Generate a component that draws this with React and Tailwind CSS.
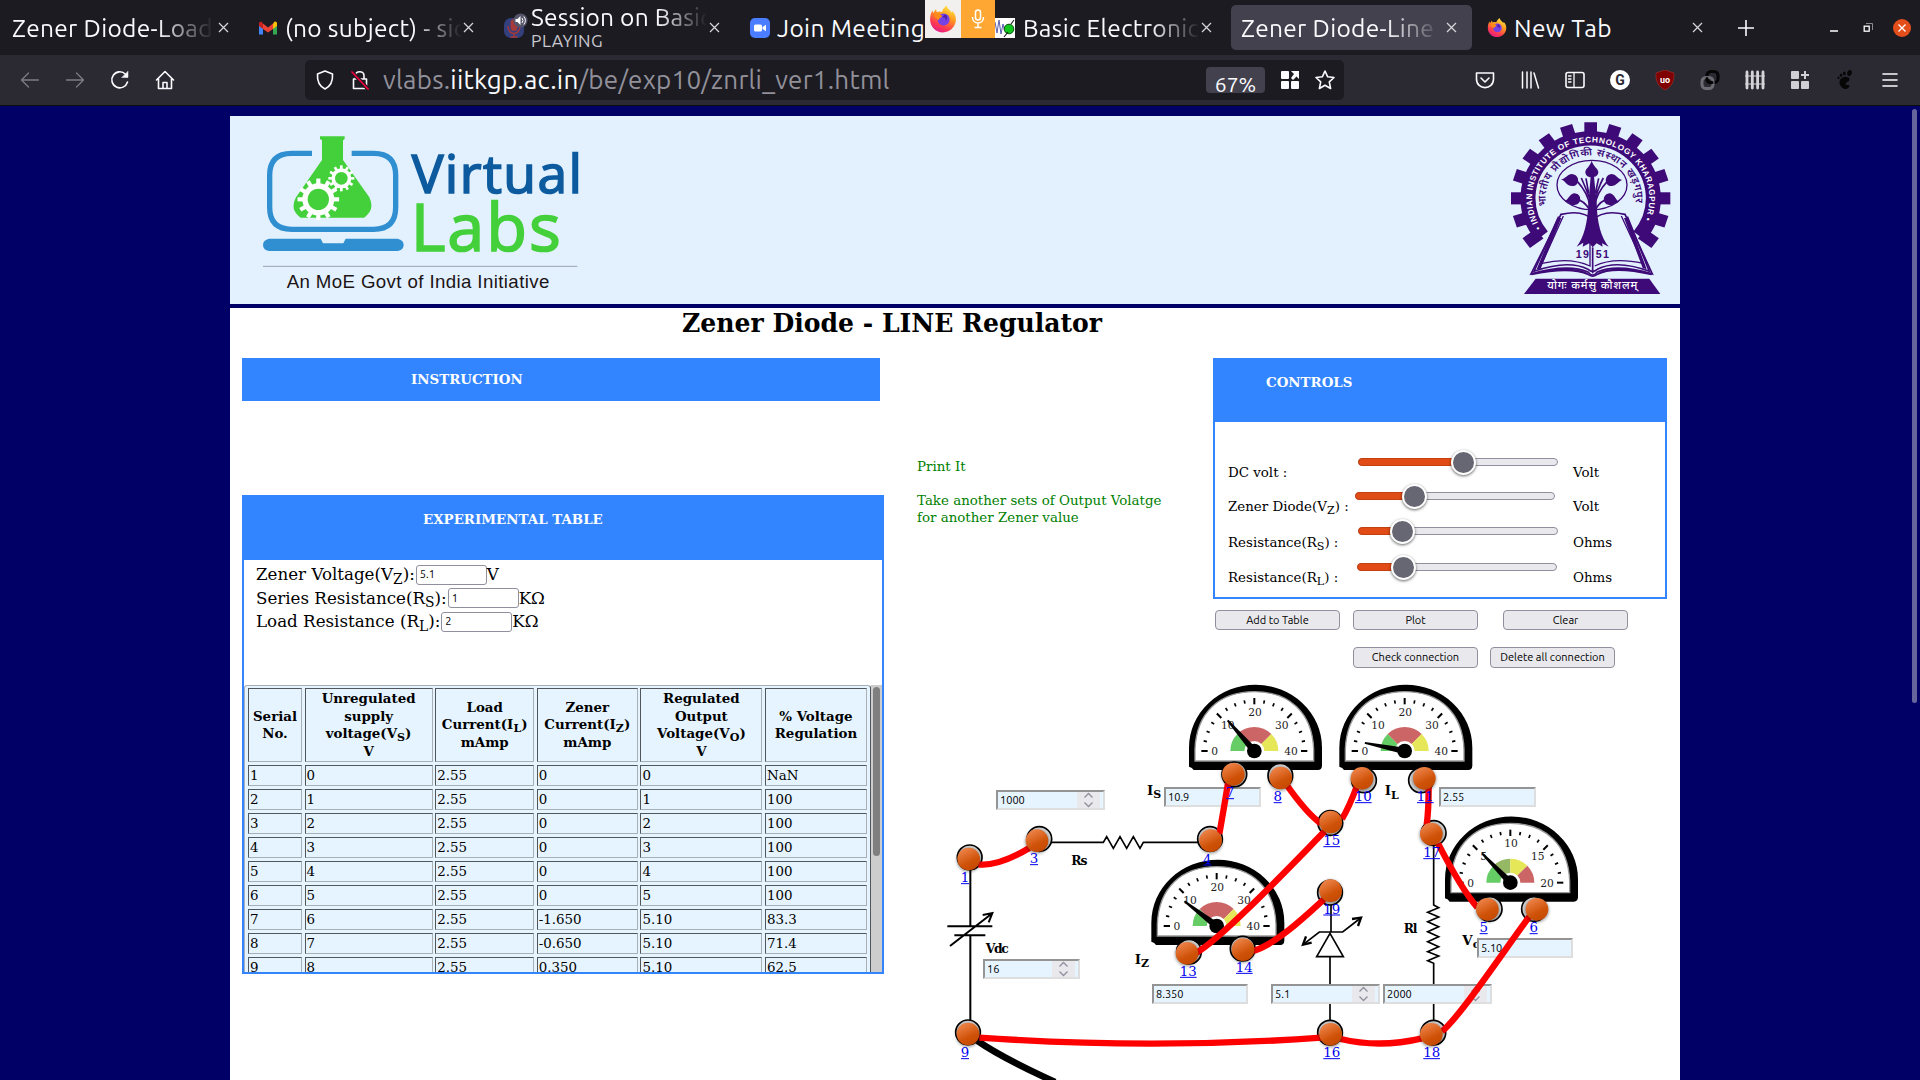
import React from "react";

const UI = "font-['Ubuntu','Noto_Sans',sans-serif]";
const SERIF = "font-['DejaVu_Serif',serif]";

/* ---------- browser chrome ---------- */

function Close({ className = "" }) {
  return (
    <svg className={`h-[11px] w-[11px] shrink-0 ${className}`} viewBox="0 0 11 11" stroke="#d8d8dc" strokeWidth="1.2">
      <path d="M1 1L10 10M10 1L1 10" />
    </svg>
  );
}

function Firefox({ className }) {
  return (
    <svg className={className} viewBox="0 0 24 24">
      <defs>
        <linearGradient id="ffBody" x1="0.8" y1="0" x2="0.3" y2="1">
          <stop offset="0" stopColor="#fff04a" />
          <stop offset="0.4" stopColor="#ff9a1f" />
          <stop offset="0.75" stopColor="#ff3b4e" />
          <stop offset="1" stopColor="#e01a8b" />
        </linearGradient>
      </defs>
      <path d="M15.5 0.5C15 3 18 4 19.5 6.5C20 6 20 5.5 20 5C22.5 8 23.5 10.5 23 14C22 19.5 17.500 23.500 12 23.500C6 23.500 1.500 19 1 13.500C0.800 10 1.500 7 3 4.500L3.500 7L6 3.500L6.500 6C8 5.500 9.500 5.300 11 6C12 3.500 13.500 1.500 15.500 0.500Z" fill="url(#ffBody)" />
      <circle cx="12.500" cy="12.500" r="5.200" fill="#7542e5" />
      <path d="M4 8.500C7 6.500 9.500 8 11.500 9.500C10 11.500 8.500 11 8.500 13C6.500 12 5 10.500 4 8.500Z" fill="#ff8a16" />
      <path d="M11 10.500C14 10 15 12 14 14C16 12.500 16 9.500 14 8Z" fill="#4c1fa8" />
    </svg>
  );
}

function TabTitle({ children, className = "" }) {
  return (
    <span className={`block overflow-hidden whitespace-nowrap text-[24.5px] leading-[30px] text-[#fbfbfe] ${className}`}>
      {children}
    </span>
  );
}

const FADE = "[mask-image:linear-gradient(to_right,black_72%,transparent_100%)]";

function TabBar() {
  return (
    <div className={`relative flex h-[55px] items-center bg-[#1c1b22] ${UI}`}>
      <div className="flex w-[259px] items-center pl-[12px]">
        <TabTitle className={`w-[202px] tracking-[0.3px] ${FADE}`}>Zener Diode-Load</TabTitle>
        <Close className="ml-[4px]" />
      </div>
      <div className="flex w-[244px] items-center">
        <svg className="h-[14px] w-[18px]" viewBox="0 0 18 14">
          <path d="M0 2V13.500H4V5Z" fill="#4285f4" />
          <path d="M18 2V13.500H14V5Z" fill="#34a853" />
          <path d="M0 1.500V5L4 8V2.500L2.500 0.500Z" fill="#c5221f" />
          <path d="M4 2.500V8L9 11.500L14 8V2.500L9 6.500Z" fill="#ea4335" />
          <path d="M14 2.500V8L18 5V1.500L16 0.300Z" fill="#fbbc04" />
        </svg>
        <TabTitle className={`ml-[8px] w-[177px] tracking-[0.3px] ${FADE}`}>(no subject) - sid</TabTitle>
        <Close className="ml-[1px]" />
      </div>
      <div className="flex w-[247px] items-center">
        <svg className="h-[36px] w-[25px]" viewBox="0 0 25 36">
          <rect x="1" y="8" width="20" height="20" rx="7" fill="#34407e" />
          <rect x="7.500" y="9" width="7" height="12" rx="3.500" fill="#a33a3c" />
          <path d="M5 16C5 26 17 26 17 16M11 23V27M7.500 27H14.500" stroke="#a33a3c" strokeWidth="1.500" fill="none" />
          <circle cx="17.500" cy="10.500" r="7" fill="#55556a" />
          <path d="M12.500 9H14.500L17.500 6V15L14.500 12H12.500Z" fill="#fff" />
          <path d="M19 8Q21 10.500 19 13M20.800 6.500Q24 10.500 20.800 14.500" stroke="#fff" fill="none" />
        </svg>
        <div className="flex h-[55px] flex-col pl-[3px] pt-[2px]">
          <TabTitle className={`w-[176px] tracking-[0.2px] ${FADE}`}>Session on Basic</TabTitle>
          <span className="-mt-[2px] text-[17.500px] leading-[22px] tracking-[0.5px] text-[#c9c8ce]">PLAYING</span>
        </div>
        <Close className="ml-[2px]" />
      </div>
      <div className="flex w-[175px] items-center">
        <svg className="h-[20px] w-[20px]" viewBox="0 0 20 20">
          <rect width="20" height="20" rx="5" fill="#4a7dff" />
          <rect x="4" y="6.500" width="8" height="7" rx="1.500" fill="#fff" />
          <path d="M12.500 9L16 6.800V13.200L12.500 11Z" fill="#fff" />
        </svg>
        <TabTitle className="ml-[7px] w-[148px] tracking-[0.35px]">Join Meeting</TabTitle>
      </div>
      <div className="flex h-[38px] w-[70px] self-start">
        <div className="flex w-[36px] items-center justify-center bg-[#f1f0ef]">
          <Firefox className="h-[28px] w-[28px]" />
        </div>
        <div className="flex w-[34px] items-center justify-center bg-[#ffa733]">
          <svg className="h-[20px] w-[14px]" viewBox="0 0 14 20" fill="none" stroke="#fff" strokeWidth="1.500">
            <rect x="4.500" y="1" width="5" height="10" rx="2.500" />
            <path d="M1.500 8C1.500 16 12.500 16 12.500 8M7 14V18M3.500 18.500H10.500" />
          </svg>
        </div>
      </div>
      <div className="flex w-[236px] items-center">
        <svg className="h-[20px] w-[20px]" viewBox="0 0 20 20">
          <rect width="20" height="20" fill="#fff" />
          <path d="M0 4L2 15L4 2L6 16L8 6L9.500 12" stroke="#5a5fb0" fill="none" />
          <circle cx="14" cy="11" r="4.800" fill="#12c81e" stroke="#0a5010" />
          <path d="M9 19L13 14M16 6L19 2" stroke="#222" strokeWidth="1.200" />
        </svg>
        <TabTitle className={`ml-[8px] w-[177px] tracking-[0.3px] ${FADE}`}>Basic Electronics</TabTitle>
        <Close className="ml-[1px]" />
      </div>
      <div className="flex h-[45px] w-[241px] items-center rounded-[5px] bg-[#42414d] pl-[10px]">
        <TabTitle className={`w-[200px] tracking-[0.3px] ${FADE}`}>Zener Diode-Line R</TabTitle>
        <Close className="ml-[5px]" />
      </div>
      <div className="flex items-center pl-[15px]">
        <Firefox className="h-[21px] w-[20px]" />
        <TabTitle className="ml-[7px] w-[178px] tracking-[0.4px]">New Tab</TabTitle>
        <Close />
        <svg className="ml-[35px] h-[16px] w-[16px]" viewBox="0 0 16 16" stroke="#fbfbfe" strokeWidth="1.600">
          <path d="M8 0V16M0 8H16" />
        </svg>
        <svg className="ml-[76px] h-[16px] w-[8px]" viewBox="0 0 8 16">
          <path d="M0 11H8" stroke="#fff" strokeWidth="1.500" />
        </svg>
        <svg className="ml-[25px] h-[10px] w-[10px]" viewBox="0 0 10 10" fill="none">
          <path d="M3 0.500H9.500V7" stroke="#8c8b92" />
          <rect x="1.200" y="3.200" width="5" height="5" stroke="#fff" strokeWidth="1.300" />
        </svg>
        <svg className="ml-[20px] h-[18px] w-[18px]" viewBox="0 0 18 18">
          <circle cx="9" cy="9" r="9" fill="#e34e1b" />
          <path d="M5.500 5.500L12.500 12.500M12.500 5.500L5.500 12.500" stroke="#fff" strokeWidth="1.300" />
        </svg>
      </div>
    </div>
  );
}

function Icon({ className = "", children }) {
  return (
    <svg className={`h-[20px] w-[20px] shrink-0 ${className}`} viewBox="0 0 20 20" fill="none" stroke="#fbfbfe" strokeWidth="1.600" strokeLinecap="round" strokeLinejoin="round">
      {children}
    </svg>
  );
}

function Toolbar() {
  return (
    <div className={`flex h-[50px] items-center bg-[#2b2a33] ${UI}`}>
      <div className="flex w-[305px] items-center gap-[25px] pl-[20px]">
        <Icon><path d="M18.500 10H2M8.500 3L1.500 10L8.500 17" stroke="#7d7c84" strokeWidth="1.300" /></Icon>
        <Icon><path d="M1.500 10H18M11.500 3L18.500 10L11.500 17" stroke="#7d7c84" strokeWidth="1.300" /></Icon>
        <Icon><path d="M17.500 12A8 8 0 1 1 15.500 4.200" /><path d="M18 1.500V7.500H12Z" fill="#fbfbfe" strokeWidth="0.500" /></Icon>
        <Icon><path d="M1.500 10L10 1.500L18.500 10M3.500 9V18.500H16.500V9M8 18V12.500H12V18" /></Icon>
      </div>
      <div className="flex h-[40px] w-[1039px] items-center rounded-[5px] bg-[#1c1b22] pl-[10px]">
        <Icon><path d="M10 1L17.500 4C18 11 15 16.500 10 19C5 16.500 2 11 2.500 4Z" /></Icon>
        <Icon className="ml-[15px]">
          <path d="M5.500 9V5.500C5.500 0.500 14 0.500 14 5.500V9M3.500 9H16.500V18.500H3.500Z" />
          <path d="M2 2L18 19" stroke="#1c1b22" strokeWidth="4" />
          <path d="M2 2L18 19" stroke="#f0003c" strokeWidth="1.800" />
        </Icon>
        <span className="ml-[13px] w-[823px] whitespace-nowrap text-[26px] leading-[38px] tracking-[0.25px] text-[#92919a]">
          vlabs.<span className="text-[#fbfbfe]">iitkgp.ac.in</span>/be/exp10/znrli_ver1.html
        </span>
        <span className="flex h-[26px] w-[59px] items-center justify-center rounded-[4px] bg-[#42414d] pt-[8px] text-[21px] leading-[20px] text-[#fbfbfe]">67%</span>
        <svg className="ml-[16px] h-[18px] w-[18px]" viewBox="0 0 18 18" fill="#fbfbfe">
          <rect width="8" height="8" rx="1" /><rect y="10" width="8" height="8" rx="1" /><rect x="10" y="10" width="8" height="8" rx="1" />
          <path d="M10 0H18V8L15.500 5.500L12 9L10 7L13 3Z" />
        </svg>
        <Icon className="ml-[16px]"><path d="M10 1L12.700 6.800L19 7.500L14.300 11.800L15.600 18.500L10 15.200L4.400 18.500L5.700 11.800L1 7.500L7.300 6.800Z" /></Icon>
      </div>
      <div className="flex items-center gap-[25px] pl-[131px]">
        <Icon><path d="M1.500 3H18.500V9C18.500 20.500 1.500 20.500 1.500 9ZM6 8L10 12L14 8" /></Icon>
        <Icon><path d="M2.500 2V18M7 2V18M11 2V18M14 3L18.500 18" strokeWidth="1.500" /></Icon>
        <Icon><rect x="1" y="2.500" width="18" height="15" rx="2" /><path d="M9 3V17M3.500 6H6M3.500 9H6M3.500 12H6" strokeWidth="1.300" /></Icon>
        <div className="flex h-[20px] w-[20px] items-center justify-center rounded-full bg-white font-['Roboto',sans-serif] text-[14px] font-bold text-[#2b2a33]">G</div>
        <div className="relative flex h-[20px] w-[20px] items-center justify-center">
          <svg className="absolute h-[20px] w-[20px]" viewBox="0 0 20 20"><path d="M10 0L19 3C19.500 12 16 17 10 20C4 17 0.500 12 1 3Z" fill="#800000" stroke="#a33" strokeWidth="0.600" /></svg>
          <span className="relative font-['Roboto',sans-serif] text-[9px] font-bold leading-[8px] text-white">uo</span>
        </div>
        <Icon>
          <rect x="7" y="1.500" width="11" height="11" rx="4" stroke="#050505" strokeWidth="3" />
          <rect x="2" y="7.500" width="11" height="11" rx="4" stroke="#6d6c74" strokeWidth="3" />
          <path d="M7 8.500V9C7 11.500 8.500 12.500 10.500 12.500H12" stroke="#050505" strokeWidth="3" />
        </Icon>
        <Icon><path d="M2 2V18M7.300 2V18M12.600 2V18M18 2V18" strokeWidth="2.800" stroke="#d5d5d9" /><path d="M0 6H20M0 14H20" strokeWidth="1.200" stroke="#d5d5d9" /></Icon>
        <svg className="h-[20px] w-[20px]" viewBox="0 0 20 20" fill="#cfcfd4">
          <rect x="1" y="1" width="8" height="8" rx="1" /><rect x="1" y="11" width="8" height="8" rx="1" /><rect x="11" y="11" width="8" height="8" rx="1" /><path d="M14 1H16V4H19V6H16V9H14V6H11V4H14Z" />
        </svg>
        <svg className="h-[20px] w-[20px]" viewBox="0 0 20 20" fill="#070708">
          <path d="M5 10C7 5.500 14 6 14.500 9C15 12 9.500 12 11 14.500C12 16 14 14 14.500 15.500C14.500 18 11 20 8.500 18.500C5.500 17 3.500 13.500 5 10Z" />
          <ellipse cx="14.500" cy="3" rx="2.300" ry="3" transform="rotate(15 14.500 3)" /><ellipse cx="9.300" cy="3.500" rx="1.400" ry="2" /><ellipse cx="6" cy="5.300" rx="1.200" ry="1.700" /><ellipse cx="3.500" cy="7.800" rx="1" ry="1.400" />
        </svg>
        <Icon><path d="M3 4H17M3 10H17M3 16H17" /></Icon>
      </div>
    </div>
  );
}

/* ---------- site header ---------- */

function Gear({ cx, cy, r, hole, teeth }) {
  return (
    <g transform={`translate(${cx} ${cy})`}>
      {Array.from({ length: teeth }, (_, i) => (
        <rect key={i} x={-r * 0.13} y={-r * 1.3} width={r * 0.26} height={r * 0.5} fill="#fff" transform={`rotate(${(i * 360) / teeth})`} />
      ))}
      <circle r={r} fill="#fff" />
      <circle r={hole} fill="#44d03a" />
    </g>
  );
}

function VirtualLabsLogo() {
  return (
    <svg className="h-[187px] w-[390px]" viewBox="30 48 1170 561">
      <path d="M276 160H215Q149 160 149 226V322Q149 388 215 388H461Q527 388 527 322V226Q527 160 461 160H395" fill="none" stroke="#2f8fd0" strokeWidth="16" />
      <path d="M300 109H374V117L369 121V180L448 292Q466 330 432 353H242Q208 330 228 292L306 180V121L300 117Z" fill="#44d03a" />
      <Gear cx={295} cy={298} r={48} hole={32} teeth={12} />
      <Gear cx={364} cy={235} r={30} hole={19} teeth={12} />
      <path d="M147 416H302L309 430H370L377 416H533Q551 420 551 435Q551 450 533 453H147Q129 450 129 435Q129 420 147 416Z" fill="#2f8fd0" />
      <g className="font-['Open_Sans',sans-serif]">
        <text x="575" y="278" fontSize="160" fill="#0d5b9e" stroke="#0d5b9e" strokeWidth="5" textLength="511">Virtual</text>
        <text x="572" y="452" fontSize="200" fill="#44d03a" stroke="#44d03a" strokeWidth="5" textLength="450">Labs</text>
      </g>
      <path d="M129 499H1072" stroke="#9ba3ab" strokeWidth="3" />
      <text x="200" y="563" fontSize="56" fill="#1c1414" textLength="788" className="font-['Liberation_Sans',sans-serif]">An MoE Govt of India Initiative</text>
    </svg>
  );
}

function InstituteCrest() {
  const p = "#3d0a78";
  const teeth = [-126, -108, -90, -72, -54, -36, -18, 0, 18, 36, 54, 72, 90, 108, 126];
  return (
    <svg className="h-[187px] w-[200px]" viewBox="0 18 600 561">
      <defs>
        <path id="crestOuter" d="M-149 94A176 176 0 1 1 149 94" />
        <path id="crestInner" d="M-133 24A135 135 0 1 1 133 24" />
      </defs>
      <g transform="translate(332 265) scale(1 0.955)">
        {teeth.map((a) => (
          <rect key={a} x="-19" y="-239" width="38" height="50" fill={p} transform={`rotate(${a})`} />
        ))}
        <path d="M-146 118A188 188 0 1 1 146 118" fill="none" stroke={p} strokeWidth="45" />
        <text fontSize="25" fontWeight="700" fill="#fff" className="font-['Liberation_Sans',sans-serif]">
          <textPath href="#crestOuter" textLength="720">• INDIAN INSTITUTE OF TECHNOLOGY KHARAGPUR •</textPath>
        </text>
        <text fontSize="32" fontWeight="600" fill={p} className="font-['Noto_Sans','Noto_Sans_Devanagari',sans-serif]">
          <textPath href="#crestInner" textLength="460">भारतीय प्रौद्योगिकी संस्थान खड़गपुर</textPath>
        </text>
      </g>
      <ellipse cx="336" cy="225" rx="105" ry="74" fill="none" stroke={p} strokeWidth="4" />
      <path d="M243 313Q310 298 338 330Q370 298 435 313L517 492Q410 460 352 486Q338 504 324 486Q265 460 153 492Z" fill="#e3f1ff" stroke={p} strokeWidth="5" />
      <path d="M236 320L162 484Q265 448 324 478Q338 490 352 478Q410 448 508 484L442 320" fill="none" stroke={p} strokeWidth="5" />
      <path d="M250 318L186 460Q270 440 330 468V330M424 318L490 460Q400 440 344 468" fill="none" stroke={p} strokeWidth="4" />
      <path d="M232 324L170 478L182 476L244 324ZM444 324L500 478L488 474L432 324Z" fill={p} />
      <path d="M153 490Q265 462 322 488Q338 504 354 488Q410 462 517 490L514 496Q400 470 352 496Q338 506 324 496Q270 472 155 496Z" fill={p} />
      <path d="M332 200H342L350 280Q352 370 386 410L366 400L368 410L350 400L338 412L328 400L308 410L310 398L290 410Q322 370 325 280Z" fill={p} />
      <path d="M338 412V490" stroke={p} strokeWidth="5" />
      <path d="M330 290Q325 250 290 212M344 290Q348 250 384 212M328 262Q312 222 304 204M346 262Q360 222 370 204M330 300Q310 270 290 268M345 300Q362 270 384 268M326 250L318 205M346 250L356 205" fill="none" stroke={p} strokeWidth="5" />
      <path d="M335 152C340 170 355 176 355 186C355 200 340 202 335 202C330 202 316 200 316 186C316 176 330 170 335 152Z" fill={p} />
      <path d="M243 208C258 206 262 192 276 192C292 194 296 206 294 216C290 230 274 230 266 226C258 222 254 212 243 208ZM426 210C412 206 408 192 394 192C380 194 376 206 378 216C382 230 396 230 404 226C412 222 416 214 426 210ZM254 274C266 268 270 250 284 250C300 252 302 264 300 272C296 286 280 286 274 284C266 280 264 276 254 274ZM417 276C406 268 402 250 388 250C374 252 370 264 372 272C376 286 390 286 398 284C406 280 408 278 417 276Z" fill={p} />
      <text x="287" y="443" fontSize="32" fontWeight="700" fill={p} textLength="40" className="font-['Liberation_Sans',sans-serif]">19</text>
      <text x="347" y="443" fontSize="32" fontWeight="700" fill={p} textLength="40" className="font-['Liberation_Sans',sans-serif]">51</text>
      <path d="M167 506H508L541 552H132Z" fill={p} />
      <text x="202" y="538" fontSize="33" fontWeight="500" fill="#fff" textLength="270" className="font-['Noto_Sans','Noto_Sans_Devanagari',sans-serif]">योगः कर्मसु कौशलम्</text>
    </svg>
  );
}

/* ---------- left column ---------- */

const Sub = ({ children }) => <sub className="relative bottom-[-0.25em] text-[0.83em] leading-none">{children}</sub>;

const rows = [
  ["1", "0", "2.55", "0", "0", "NaN"],
  ["2", "1", "2.55", "0", "1", "100"],
  ["3", "2", "2.55", "0", "2", "100"],
  ["4", "3", "2.55", "0", "3", "100"],
  ["5", "4", "2.55", "0", "4", "100"],
  ["6", "5", "2.55", "0", "5", "100"],
  ["7", "6", "2.55", "-1.650", "5.10", "83.3"],
  ["8", "7", "2.55", "-0.650", "5.10", "71.4"],
  ["9", "8", "2.55", "0.350", "5.10", "62.5"],
];

const heads = [
  <>Serial<br />No.</>,
  <>Unregulated<br />supply<br />voltage(V<Sub>S</Sub>)<br />V</>,
  <>Load<br />Current(I<Sub>L</Sub>)<br />mAmp</>,
  <>Zener<br />Current(I<Sub>Z</Sub>)<br />mAmp</>,
  <>Regulated<br />Output<br />Voltage(V<Sub>O</Sub>)<br />V</>,
  <>% Voltage<br />Regulation</>,
];

const GRID = "grid grid-cols-[54px_128px_99px_101px_122px_102px] gap-x-[2.6px]";
const CELL = "border border-b-[#a9b0b5] border-l-[#50565b] border-r-[#a9b0b5] border-t-[#50565b]";

function Field({ label, sub, value, unit }) {
  return (
    <div className="flex h-[23.5px] items-center whitespace-nowrap text-[16.700px] leading-[23px]">
      <span>{label}<Sub>{sub}</Sub>):</span>
      <span className={`ml-px flex h-[20px] w-[71px] shrink-0 items-center rounded-[3px] border border-[#8f8f9d] bg-white pl-[3px] text-[11px] ${UI}`}>{value}</span>
      <span>{unit}</span>
    </div>
  );
}

function LeftColumn() {
  return (
    <div className="w-[642px] shrink-0">
      <div className="flex h-[43px] w-[638px] items-center bg-[#3385ff] pl-[169px] text-[13.400px] font-bold text-white">INSTRUCTION</div>
      <div className="mt-[94px] h-[479px] border-2 border-[#3385ff]">
        <div className="h-[63px] bg-[#3385ff] pl-[179px] pt-[13px] text-[13.400px] font-bold leading-[18px] text-white">EXPERIMENTAL TABLE</div>
        <div className="h-[125px] pl-[12px] pt-[3px]">
          <Field label="Zener Voltage(V" sub="Z" value="5.1" unit="V" />
          <Field label="Series Resistance(R" sub="S" value="1" unit="KΩ" />
          <Field label="Load Resistance (R" sub="L" value="2" unit="KΩ" />
        </div>
        <div className="flex h-[287px] overflow-hidden">
          <div className="flex h-[400px] w-[627px] shrink-0 flex-col gap-[3px] rounded-t-[3px] border border-[#a9b0b5] border-r-[#50565b] bg-[#e6f4ff] pl-[3px] pt-[2px]">
            <div className={GRID}>
              {heads.map((h, i) => (
                <div key={i} className={`flex h-[74px] items-center justify-center text-center text-[13.400px] font-bold leading-[17.500px] ${CELL}`}><span>{h}</span></div>
              ))}
            </div>
            {rows.map((r) => (
              <div key={r[0]} className={GRID}>
                {r.map((c, i) => (
                  <div key={i} className={`h-[21px] pl-px text-[13.400px] leading-[19px] ${CELL}`}>{c}</div>
                ))}
              </div>
            ))}
          </div>
          <div className="flex-1 bg-[#cdcdcd] pl-[2px] pt-[2px]">
            <div className="h-[169px] w-[7px] rounded-full bg-[#7f7f7f]" />
          </div>
        </div>
      </div>
    </div>
  );
}

/* ---------- controls ---------- */

function Slider({ fill, className }) {
  return (
    <div className={`relative flex h-[8px] w-[200px] rounded-full border border-[#8f8f9d] bg-[#e9e9ed] ${className}`}>
      <div className={`-m-px h-[8px] rounded-l-full border border-[#c5400f] bg-[#e04b16] ${fill}`} />
      <div className="-ml-[12px] -mt-[9px] h-[25px] w-[25px] shrink-0 rounded-full border-2 border-white bg-[#676774] shadow-[0_1px_3px_rgba(0,0,0,0.6)]" />
    </div>
  );
}

const sliders = [
  { label: <>DC volt :</>, fill: "w-[106px]", unit: "Volt", row: "h-[34px]", track: "ml-0", u: "" },
  { label: <>Zener Diode(V<Sub>Z</Sub>) :</>, fill: "w-[60px]", unit: "Volt", row: "h-[36px]", track: "-ml-[3px] mr-[3px]", u: "-ml-[2px]" },
  { label: <>Resistance(R<Sub>S</Sub>) :</>, fill: "w-[45px]", unit: "Ohms", row: "h-[35px]", track: "-mt-px", u: "" },
  { label: <>Resistance(R<Sub>L</Sub>) :</>, fill: "w-[47px]", unit: "Ohms", row: "h-[24px]", track: "-ml-px mr-px", u: "" },
];

function Button({ children, className = "h-[20px]" }) {
  return (
    <div className={`flex w-[125px] items-center justify-center rounded-[4px] border border-[#8f8f9d] bg-[#e9e9ed] text-[11px] text-black ${UI} ${className}`}>{children}</div>
  );
}

function Controls() {
  return (
    <div className="w-[454px]">
      <div className="h-[241px] border-2 border-[#3385ff] text-[13.400px]">
        <div className="h-[62px] bg-[#3385ff] pl-[51px] pt-[13px] font-bold leading-[18px] text-white">CONTROLS</div>
        <div className="pl-[13px] pt-[36px]">
          {sliders.map((s, i) => (
            <div key={i} className={`flex whitespace-nowrap ${s.row}`}>
              <span className="w-[130px] pt-[6px] leading-[17px]">{s.label}</span>
              <Slider fill={s.fill} className={s.track} />
              <span className={`ml-[15px] pt-[6px] leading-[17px] ${s.u}`}>{s.unit}</span>
            </div>
          ))}
        </div>
      </div>
      <div className="mt-[11px] flex pl-[2px]">
        <Button>Add to Table</Button>
        <Button className="ml-[13px] h-[20px]">Plot</Button>
        <Button className="ml-[25px] h-[20px]">Clear</Button>
      </div>
      <div className="mt-[17px] flex pl-[140px]">
        <Button className="h-[21px]">Check connection</Button>
        <Button className="ml-[12px] h-[21px]">Delete all connection</Button>
      </div>
    </div>
  );
}

/* ---------- circuit canvas: svg units are a third of a pixel ---------- */

const polar = (r, deg) => [-r * Math.cos((deg * Math.PI) / 180), -r * Math.sin((deg * Math.PI) / 180)];

function sector(a, b) {
  const [x1, y1] = polar(72, a), [x2, y2] = polar(72, b), [x3, y3] = polar(30, b), [x4, y4] = polar(30, a);
  return `M${x1} ${y1}A72 72 0 0 1 ${x2} ${y2}L${x3} ${y3}A30 30 0 0 0 ${x4} ${y4}Z`;
}

const G = "#66cc66", R = "#cc6666", Y = "#e6e659", O = "#95b865";

function Meter({ x, y, angle, labels, bands }) {
  const pos = [[-119, 13], [-80, -67], [2, -106], [82, -67], [110, 13]];
  return (
    <g transform={`translate(${x} ${y})`}>
      <path d="M-196 32V-10A199 188 0 0 1 203 -10V44Q202 57 191 57H-182Q-186 49 -196 47Z" fill="#000" />
      <path d="M-178 30V-5C-174 -115 -105 -178 0 -178C105 -178 174 -115 178 -5V30Z" fill="#fff" stroke="#999" strokeWidth="4" />
      {bands.map(([a, b, c]) => <path key={a} d={sector(a, b)} fill={c} />)}
      {Array.from({ length: 17 }, (_, i) => {
        const major = i % 4 === 0;
        const [x1, y1] = polar(major ? 140 : 145, i * 11.25);
        const [x2, y2] = polar(major ? 159 : 155, i * 11.25);
        return <line key={i} x1={x1} y1={y1} x2={x2} y2={y2} stroke="#000" strokeWidth={major ? 6 : 5} />;
      })}
      {labels.map((l, i) => (
        <text key={l} x={pos[i][0]} y={pos[i][1]} fontSize="32" textAnchor="middle" fill="#222">{l}</text>
      ))}
      <path d="M-122 -3L-122 3L0 10L18 0L0 -10Z" fill="#000" transform={`rotate(${angle})`} />
      <circle r="22" fill="#000" />
    </g>
  );
}

const std = [[0, 45, G], [45, 135, R], [135, 180, Y]];
const quad = [[0, 45, G], [45, 90, O], [90, 135, Y], [135, 180, R]];

/* id, ring x/y, ball x/y, label x/baseline */
const nodes = [
  [1, 89, 562, 86, 567, 75, 637], [3, 298, 507, 291, 512, 282, 580], [4, 810, 507, 812, 512, 802, 581],
  [7, 883, 313, 880, 313, 870, 382], [8, 1021, 317, 1022, 324, 1013, 394], [15, 1171, 459, 1172, 456, 1175, 526],
  [10, 1272, 331, 1266, 325, 1270, 394], [19, 1170, 668, 1172, 662, 1175, 731], [13, 747, 845, 741, 850, 745, 918],
  [14, 908, 836, 909, 839, 913, 906], [9, 84, 1087, 84, 1092, 75, 1162], [16, 1170, 1088, 1172, 1093, 1175, 1162],
  [11, 1443, 331, 1453, 325, 1456, 394], [17, 1481, 489, 1474, 492, 1475, 562], [5, 1649, 717, 1642, 718, 1631, 787],
  [6, 1782, 717, 1791, 718, 1781, 787], [18, 1480, 1088, 1474, 1093, 1475, 1162],
];

const wires = [
  "M115 583Q175 590 268 534", "M838 492Q850 425 864 340", "M1038 342Q1100 430 1142 460", "M1252 345Q1228 410 1206 447",
  "M1154 484C1050 590 850 800 770 848", "M940 843C1010 820 1090 745 1152 688", "M1466 350Q1466 420 1460 465",
  "M1494 520C1530 590 1570 665 1612 712", "M1768 740C1690 845 1560 1040 1506 1084",
  "M118 1103Q640 1139 1144 1103", "M1202 1107Q1320 1135 1446 1105",
];

const inputs = [
  ["1000", "left-[56px] top-[120px] w-[109px]", true], ["10.9", "left-[224px] top-[117px] w-[97px]", false],
  ["2.55", "left-[499px] top-[117px] w-[97px]", false], ["16", "left-[43px] top-[288.500px] w-[97px]", true],
  ["8.350", "left-[212px] top-[313.500px] w-[96px]", false], ["5.1", "left-[331px] top-[313.500px] w-[109px]", true],
  ["2000", "left-[443px] top-[313.500px] w-[109px]", true], ["5.10", "left-[537px] top-[267.500px] w-[96px]", false],
];

function Circuit() {
  const svg = "absolute left-0 top-0 h-[410px] w-[700px]";
  return (
    <div className="relative ml-[23px] h-[410px] w-[700px]">
      <svg className={`${svg} ${SERIF}`} viewBox="0 0 2100 1230" fill="none" stroke="#000" strokeWidth="5">
        <path d="M91 590V768M22 769H157M43 796H136M91 796V1060M30 828L155 731M128 735L157 729L146 757" strokeWidth="6" />
        <path d="M325 517H490L500 500L520 535L540 500L560 535L580 500L600 535L610 517H780" />
        <path d="M1173 700V786M1170 860V1060M1130 860H1210L1170 790ZM1090 823L1138 786H1208L1262 744" />
        <path d="M1115 818L1089 824L1098 799M1236 747L1263 743L1254 768" strokeWidth="7" />
        <path d="M1481 520V705L1496 713L1463 727L1496 741L1463 755L1496 770L1463 785L1496 800L1463 815L1496 830L1463 845L1496 858L1463 872L1481 880V1060" />
        <g fill="#000" stroke="none" fontWeight="700" fontSize="37">
          <text x="394" y="585" textLength="48">Rs</text>
          <text x="137" y="848" textLength="69">Vdc</text>
          <text x="1391" y="790" textLength="41">Rl</text>
          <text x="621" y="375" fontSize="40">I<tspan dy="10" fontSize="33">S</tspan></text>
          <text x="584" y="882" fontSize="40">I<tspan dy="10" fontSize="33">Z</tspan></text>
          <text x="1334" y="376" fontSize="40">I<tspan dy="10" fontSize="33">L</tspan></text>
          <text x="1567" y="824" fontSize="40">V<tspan dy="10" fontSize="33">o</tspan></text>
        </g>
      </svg>
      {inputs.map(([v, place, spin]) => (
        <div key={v} className={`absolute flex h-[20px] items-center justify-between border-2 border-b-[#dedede] border-l-[#949494] border-r-[#dedede] border-t-[#949494] bg-[#e6f4ff] pl-[2px] text-[11px] leading-[14px] ${place} ${UI}`}>
          {v}
          {spin && (
            <svg className="mr-[3px] h-[16px] w-[23px] bg-[#e9e9ed]" viewBox="0 0 23 16" fill="none" stroke="#8f8f9d" strokeWidth="1.300">
              <path d="M7.500 5.500L11.500 1.500L15.500 5.500M7.500 10.500L11.500 14.500L15.500 10.500" />
            </svg>
          )}
        </div>
      ))}
      <svg className={`${svg} ${SERIF}`} viewBox="0 0 2100 1230">
        <defs>
          <linearGradient id="ball" x1="0.2" y1="0" x2="0.7" y2="1">
            <stop offset="0" stopColor="#f08850" />
            <stop offset="0.65" stopColor="#cf5208" />
            <stop offset="1" stopColor="#c44900" />
          </linearGradient>
          <filter id="soft" x="-50%" y="-50%" width="200%" height="200%"><feGaussianBlur stdDeviation="5" /></filter>
        </defs>
        <Meter x={943} y={243} angle={49} labels={["0", "10", "20", "30", "40"]} bands={std} />
        <Meter x={1394} y={243} angle={11.5} labels={["0", "10", "20", "30", "40"]} bands={std} />
        <Meter x={830} y={768} angle={37.6} labels={["0", "10", "20", "30", "40"]} bands={std} />
        <Meter x={1711} y={638} angle={46} labels={["0", "5", "10", "15", "20"]} bands={quad} />
        {nodes.map(([id, rx, ry]) => <circle key={id} cx={rx} cy={ry} r="37" fill="#d2d2d2" stroke="#000" strokeWidth="5" />)}
        <path d="M112 1112Q180 1160 345 1236" fill="none" stroke="#000" strokeWidth="20" />
        {wires.map((d) => <path key={d} d={d} fill="none" stroke="#f00" strokeWidth="19" />)}
        {nodes.map(([id, , , bx, by, lx, ly]) => (
          <g key={id}>
            <circle cx={bx} cy={by + 3} r="36" fill="#000" opacity="0.35" filter="url(#soft)" />
            <circle cx={bx} cy={by} r="34" fill="url(#ball)" />
            <text x={lx} y={ly} fontSize="40" textAnchor="middle" fill="#0000ee">{id}</text>
            <path d={`M${lx - (id > 9 ? 25 : 12)} ${ly + 4}h${id > 9 ? 50 : 24}`} stroke="#0000ee" strokeWidth="3" />
          </g>
        ))}
      </svg>
    </div>
  );
}

export default function App() {
  return (
    <div className="h-[1080px] w-[1920px] overflow-hidden bg-[#000066]">
      <TabBar />
      <Toolbar />
      <div className="flex h-[975px] border-t border-[#0c0c0d]">
        <main className={`ml-[230px] mt-[10px] w-[1450px] text-black ${SERIF}`}>
          <header className="flex h-[188px] justify-between bg-[#e3f1ff]">
            <VirtualLabsLogo />
            <InstituteCrest />
          </header>
          <div className="mt-[4px] h-[780px] bg-white">
            <h1 className="h-[50px] whitespace-nowrap pl-[452px] text-[25.100px] font-bold leading-[31px]">Zener Diode - LINE Regulator</h1>
            <div className="flex pl-[12px]">
              <LeftColumn />
              <div className="ml-[33px]">
                <div className="flex h-[312px]">
                  <div className="w-[296px] whitespace-nowrap pt-[100px] text-[13.400px] leading-[17px] text-[#008000]">
                    Print It<br /><br />Take another sets of Output Volatge<br />for another Zener value
                  </div>
                  <Controls />
                </div>
                <Circuit />
              </div>
            </div>
          </div>
        </main>
        <div className="ml-[232px] mt-[3px] h-[594px] w-[5px] rounded-full bg-[#66669c]" />
      </div>
    </div>
  );
}
